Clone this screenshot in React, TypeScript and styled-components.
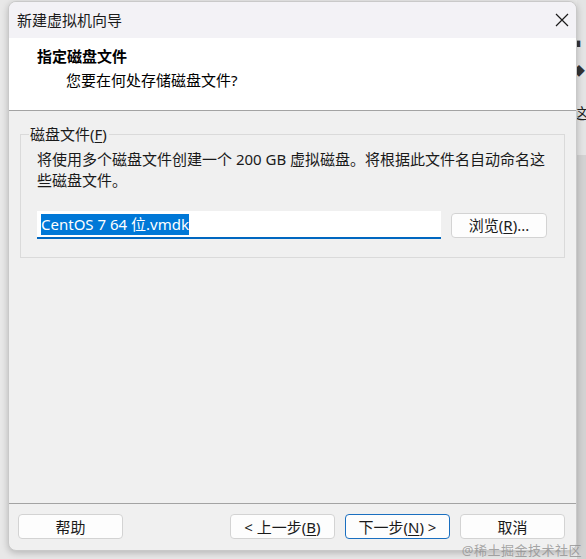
import React from "react";
import styled, { createGlobalStyle } from "styled-components";

const Global = createGlobalStyle`
  html, body { margin: 0; padding: 0; background: #e8e8e8; }
  body { font-family: "Noto Sans", "Noto Sans CJK SC", sans-serif; }
`;

const FONT = `"Noto Sans", "Noto Sans CJK SC", sans-serif`;

const Page = styled.div`
  position: relative;
  width: 586px;
  height: 559px;
  overflow: hidden;
  display: flex;
  align-items: flex-start;
  background: #e8e8e8;
  padding-top: 1px;
  box-sizing: border-box;
`;

const LeftGap = styled.div`
  width: 8px;
  flex: none;
`;

const Window = styled.div`
  width: 569px;
  height: 550px;
  flex: none;
  box-sizing: border-box;
  border: 1px solid #c9c9c9;
  border-radius: 8px;
  overflow: hidden;
  display: flex;
  flex-direction: column;
  background: #f0f0f0;
  box-shadow: 0 2px 7px rgba(0, 0, 0, 0.22);
  position: relative;
  z-index: 1;
  font-family: ${FONT};
  color: #1a1a1a;
`;

const TitleBar = styled.div`
  height: 36px;
  flex: none;
  display: flex;
  align-items: center;
  justify-content: space-between;
  background: #f3f2f6;
  padding: 0 7px 0 8px;
`;

const TitleText = styled.div`
  font-size: 15px;
  line-height: 20px;
  color: #1b1b1b;
`;

const CloseIcon = styled.svg`
  width: 14px;
  height: 14px;
  display: block;
`;

const Header = styled.div`
  height: 73px;
  flex: none;
  box-sizing: border-box;
  background: #ffffff;
  border-bottom: 1px solid #a3a3a3;
  padding: 8px 0 0 28px;
`;

const HeaderTitle = styled.div`
  font-size: 15px;
  line-height: 20px;
  font-weight: 700;
  color: #000;
`;

const HeaderSub = styled.div`
  font-size: 15px;
  line-height: 20px;
  margin: 4px 0 0 29px;
  color: #000;
`;

const Body = styled.div`
  flex: 1;
  padding: 13px 11px 0 11px;
`;

const Group = styled.fieldset`
  margin: 0;
  border: 1px solid #dadada;
  padding: 5px 17px 18px 16px;
  min-width: 0;
`;

const Legend = styled.legend`
  font-size: 15px;
  line-height: 20px;
  padding: 0 2px 0 1px;
  margin-left: -8px;
  color: #1a1a1a;
`;

const Description = styled.div`
  font-size: 15px;
  line-height: 21px;
  color: #1a1a1a;
`;

const Row = styled.div`
  margin-top: 20px;
  display: flex;
  align-items: center;
  gap: 10px;
`;

const Input = styled.div`
  width: 404px;
  height: 28px;
  box-sizing: border-box;
  background: #ffffff;
  border-bottom: 2px solid #0067c0;
  padding: 1px 0 0 4px;
  display: flex;
  align-items: center;
`;

const Selected = styled.span`
  background: #0078d7;
  color: #ffffff;
  font-size: 15px;
  line-height: 21px;
`;

const Button = styled.div<{ $primary?: boolean; $width?: number }>`
  width: ${(p) => p.$width ?? 105}px;
  height: 25px;
  box-sizing: border-box;
  border: 1px solid ${(p) => (p.$primary ? "#1a6fc0" : "#d3d3d3")};
  border-radius: 4px;
  background: #fdfdfd;
  display: flex;
  align-items: center;
  justify-content: center;
  font-size: 15px;
  line-height: 20px;
  color: #1a1a1a;
  white-space: pre;
`;

const U = styled.span`
  text-decoration: underline;
  text-underline-offset: 2px;
`;

const Footer = styled.div`
  flex: none;
  border-top: 1px solid #a3a3a3;
  padding: 10px 11px 11px 9px;
  display: flex;
  align-items: center;
`;

const Spacer = styled.div`
  flex: 1;
`;

const ButtonGroup = styled.div`
  display: flex;
  gap: 10px;
`;

const RightStrip = styled.div`
  flex: 1;
  align-self: stretch;
  margin-top: -1px;
  display: flex;
  flex-direction: column;
  background: #e4e4e4;
  overflow: hidden;
  font-family: ${FONT};
`;

const StripTop = styled.div`
  height: 155px;
  flex: none;
  display: flex;
  flex-direction: column;
  padding-top: 40px;
  box-sizing: border-box;
`;

const StripGlyph = styled.div<{ $size: number; $mt: number; $color: string }>`
  font-size: ${(p) => p.$size}px;
  line-height: ${(p) => p.$size}px;
  margin-top: ${(p) => p.$mt}px;
  margin-left: -4px;
  color: ${(p) => p.$color};
  white-space: nowrap;
`;

const StripBottom = styled.div`
  flex: 1;
  background: #d2d2d2;
`;

const Watermark = styled.div`
  position: absolute;
  right: 4px;
  bottom: 1px;
  z-index: 2;
  font-family: ${FONT};
  font-size: 13px;
  line-height: 16px;
  color: rgba(140, 140, 140, 0.75);
  letter-spacing: 0.5px;
`;

export default function App() {
  return (
    <>
      <Global />
      <Page>
        <LeftGap />
        <Window>
          <TitleBar>
            <TitleText>新建虚拟机向导</TitleText>
            <CloseIcon viewBox="0 0 14 14">
              <path d="M1 1 L13 13 M13 1 L1 13" stroke="#1a1a1a" strokeWidth="1.2" fill="none" />
            </CloseIcon>
          </TitleBar>
          <Header>
            <HeaderTitle>指定磁盘文件</HeaderTitle>
            <HeaderSub>您要在何处存储磁盘文件?</HeaderSub>
          </Header>
          <Body>
            <Group>
              <Legend>
                磁盘文件(<U>F</U>)
              </Legend>
              <Description>
                将使用多个磁盘文件创建一个 200 GB 虚拟磁盘。将根据此文件名自动命名这些磁盘文件。
              </Description>
              <Row>
                <Input>
                  <Selected>CentOS 7 64 位.vmdk</Selected>
                </Input>
                <Button $width={96}>
                  浏览(<U>R</U>)...
                </Button>
              </Row>
            </Group>
          </Body>
          <Footer>
            <Button>帮助</Button>
            <Spacer />
            <ButtonGroup>
              <Button>
                {"< 上一步("}
                <U>B</U>)
              </Button>
              <Button $primary>
                下一步(<U>N</U>
                {") >"}
              </Button>
              <Button>取消</Button>
            </ButtonGroup>
          </Footer>
        </Window>
        <RightStrip>
          <StripTop>
            <StripGlyph $size={8} $mt={0} $color="#333">■</StripGlyph>
            <StripGlyph $size={12} $mt={18} $color="#333">◆</StripGlyph>
            <StripGlyph $size={15} $mt={28} $color="#222">这</StripGlyph>
          </StripTop>
          <StripBottom />
        </RightStrip>
        <Watermark>@稀土掘金技术社区</Watermark>
      </Page>
    </>
  );
}
